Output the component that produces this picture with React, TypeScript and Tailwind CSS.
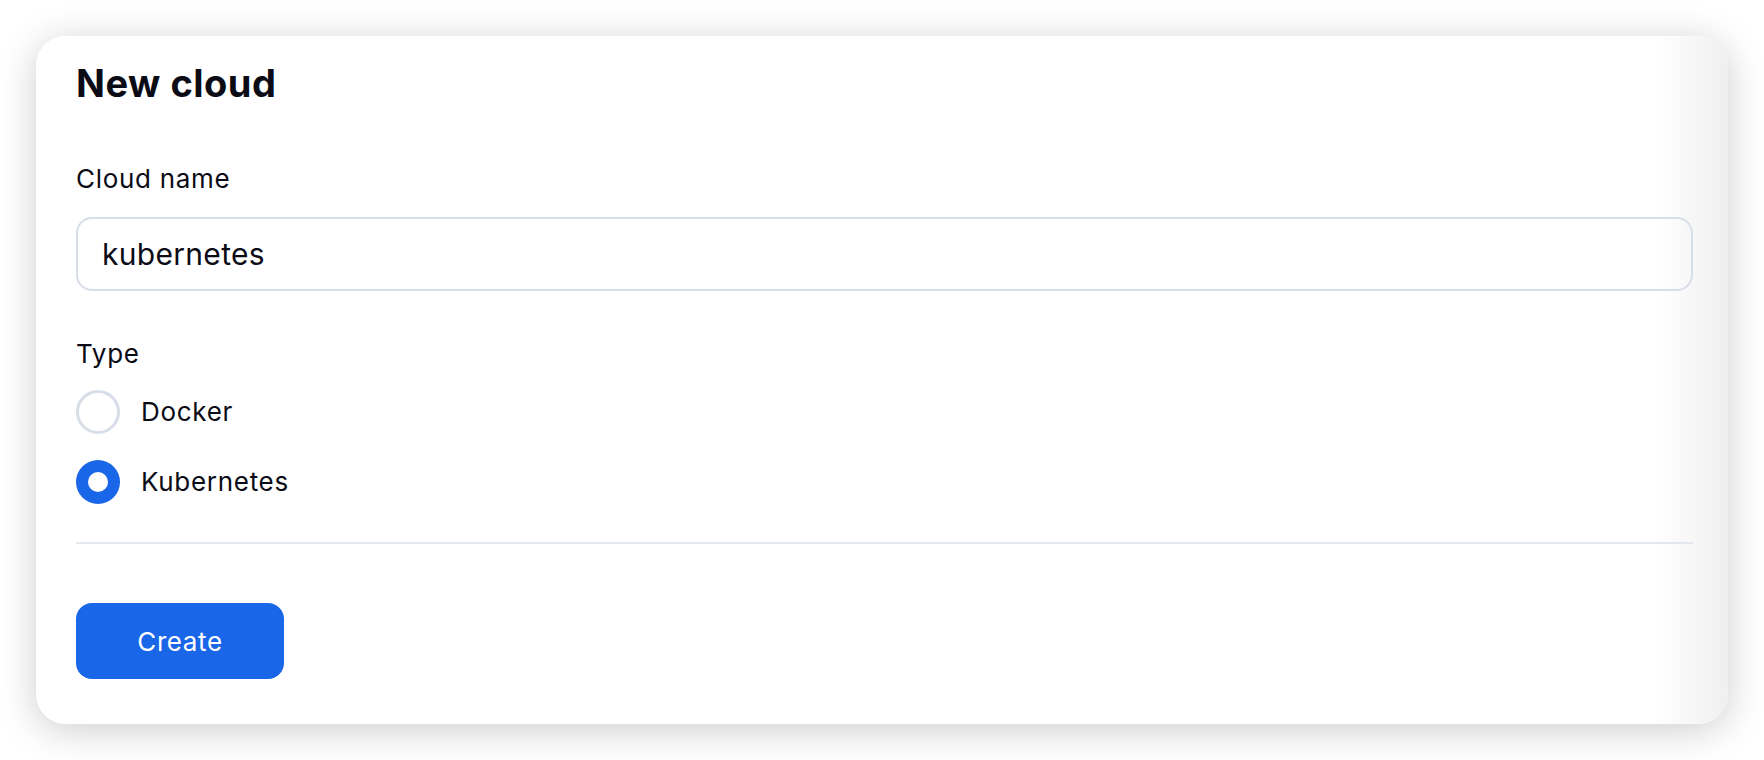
import { useState } from "react";

const types = ["Docker", "Kubernetes"];

export default function App() {
  const [name, setName] = useState("kubernetes");
  const [type, setType] = useState("Kubernetes");

  return (
    <div className="min-h-screen bg-white p-9 font-['Inter',sans-serif] text-[#0b0b16]">
      <div className="rounded-[30px] bg-[linear-gradient(to_right,#ffffff_calc(100%-72px),#efefef_100%)] pl-10 pr-[35px] pt-[27px] pb-[45px] shadow-[0_6px_38px_rgba(0,0,0,0.2)]">
        <h1 className="text-[38px] font-bold leading-[40px] tracking-[0.5px]">New cloud</h1>

        <label className="mt-[60px] block text-[26px] leading-8 tracking-[0.7px]">Cloud name</label>
        <input
          value={name}
          onChange={(e) => setName(e.target.value)}
          className="mt-[22px] block h-[74px] w-full rounded-[16px] border-2 border-[#d8dee8] bg-transparent pl-6 text-[30px] tracking-[0.3px] outline-none"
        />

        <div className="mt-[47px] text-[26px] leading-8 tracking-[0.7px]">Type</div>
        <div className="mt-[20px] flex flex-col gap-[26px]">
          {types.map((t) => {
            const on = t === type;
            return (
              <button
                key={t}
                onClick={() => setType(t)}
                className="flex h-[44px] items-center gap-[21px] text-left"
              >
                {on ? (
                  <span className="flex h-[44px] w-[44px] items-center justify-center rounded-full bg-[#1a66e8]">
                    <span className="h-[20px] w-[20px] rounded-full bg-white" />
                  </span>
                ) : (
                  <span className="h-[44px] w-[44px] rounded-full border-[3px] border-[#d8dee8]" />
                )}
                <span className="text-[26px] leading-8 tracking-[0.7px]">{t}</span>
              </button>
            );
          })}
        </div>

        <div className="mt-[38px] h-[2px] bg-[#e3e7ef]" />

        <button className="mt-[59px] flex h-[76px] w-[208px] items-center justify-center rounded-[16px] bg-[#1a66e8] text-[26px] tracking-[0.6px] text-white">
          Create
        </button>
      </div>
    </div>
  );
}
